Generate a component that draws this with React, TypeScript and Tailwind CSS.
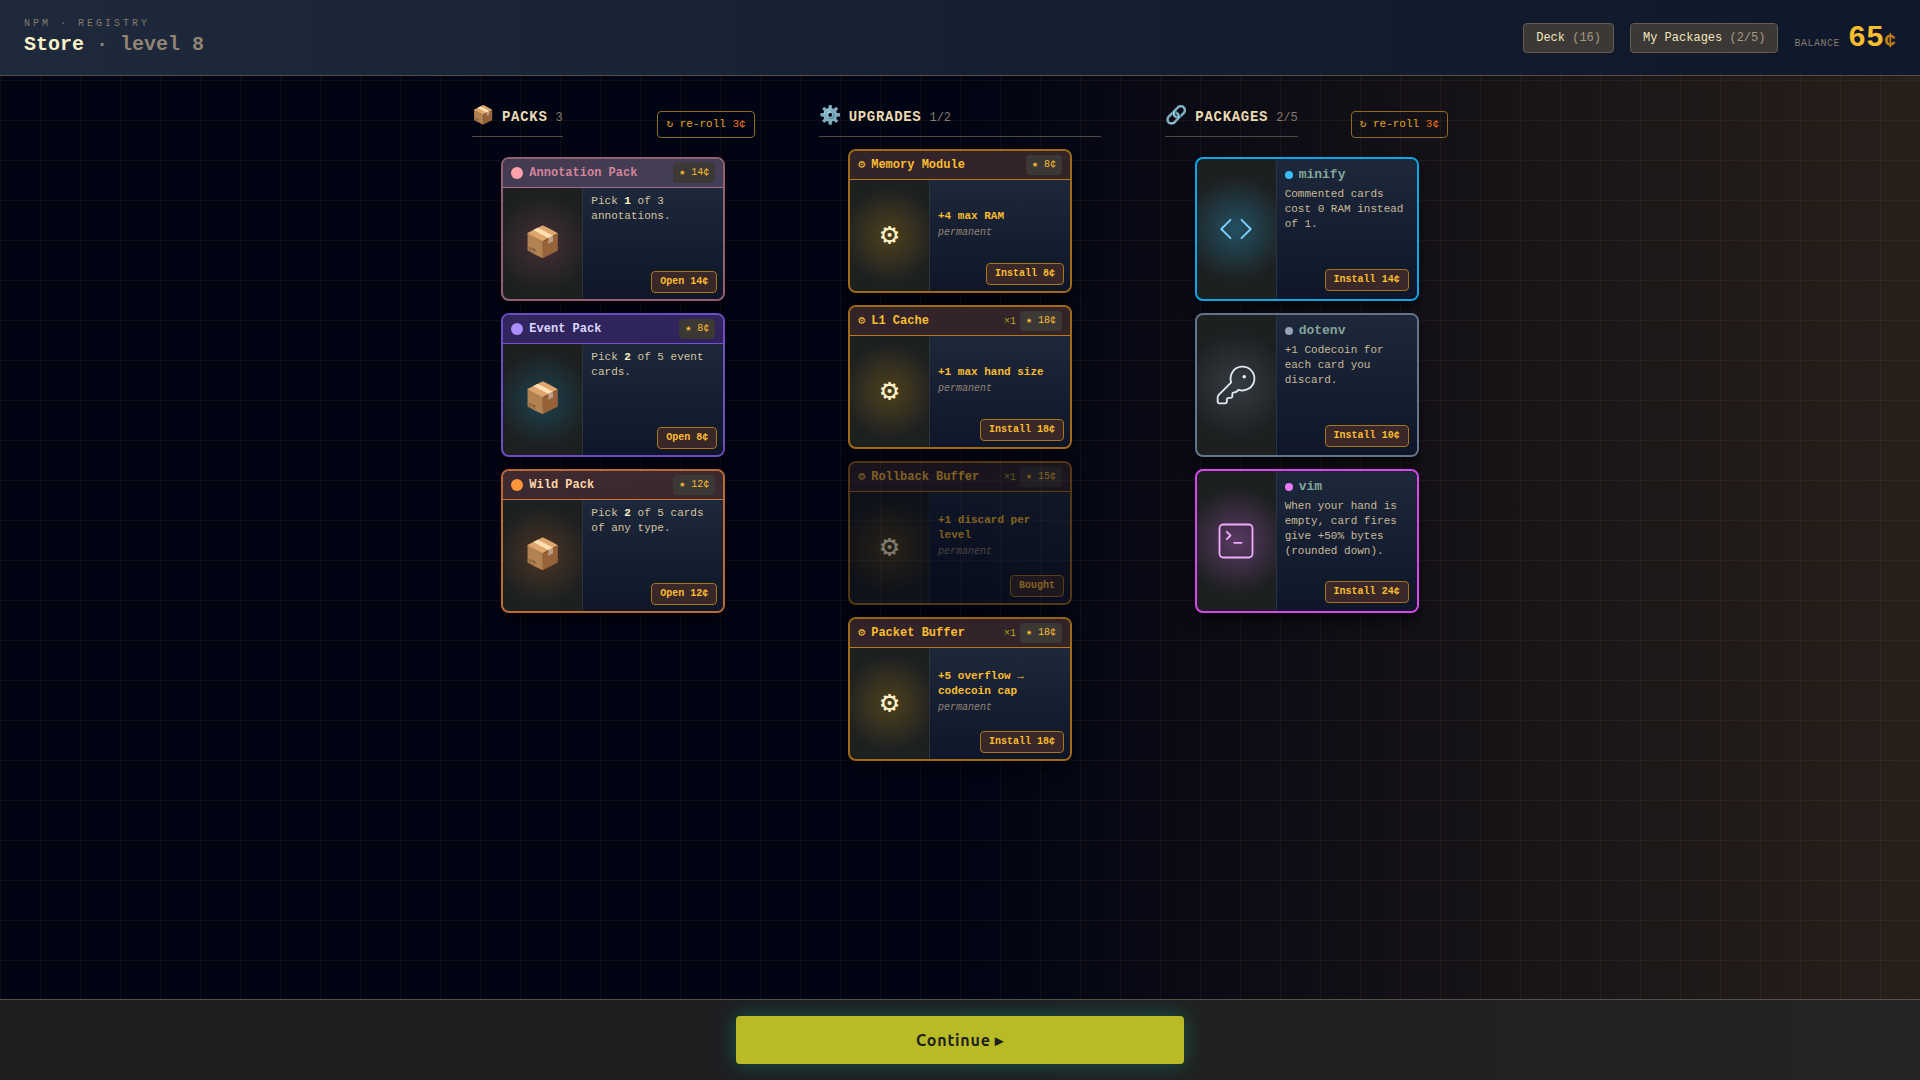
import type { ReactNode } from "react";
import clsx from "clsx";
import { ChevronsLeftRight, KeyRound, SquareTerminal } from "lucide-react";

const packs = [
	{
		name: "Annotation Pack",
		price: 14,
		pick: 1,
		rest: "of 3 annotations.",
		border: "border-[#925f74]",
		header: "border-[#a86c85] bg-linear-to-br from-[#443a4f] to-[#443f59]",
		title: "text-[#d3869b]",
		dot: "bg-[#ffa2ad]",
		glow: "bg-[radial-gradient(circle,#472f37_0%,transparent_70%)]",
	},
	{
		name: "Event Pack",
		price: 8,
		pick: 2,
		rest: "of 5 event cards.",
		border: "border-[#6d4bc3]",
		header: "border-[#7650d0] bg-linear-to-br from-[#33265f] to-[#2d2359]",
		title: "text-[#ddd6ff]",
		dot: "bg-[#ab8eff]",
		glow: "bg-[radial-gradient(circle,#1c424f_0%,transparent_70%)]",
	},
	{
		name: "Wild Pack",
		price: 12,
		pick: 2,
		rest: "of 5 cards of any type.",
		border: "border-[#b96b36]",
		header: "border-[#c87539] bg-linear-to-br from-[#3e2a2f] to-[#3a2830]",
		title: "text-[#ffd7a8]",
		dot: "bg-[#ff953b]",
		glow: "bg-[radial-gradient(circle,#4d3524_0%,transparent_70%)]",
	},
];

const upgrades = [
	{ name: "Memory Module", price: 8, effect: "+4 max RAM" },
	{ name: "L1 Cache", price: 18, effect: "+1 max hand size", stock: 1 },
	{
		name: "Rollback Buffer",
		price: 15,
		effect: "+1 discard per level",
		stock: 1,
		bought: true,
	},
	{
		name: "Packet Buffer",
		price: 18,
		effect: "+5 overflow → codecoin cap",
		stock: 1,
	},
];

const packages = [
	{
		name: "minify",
		price: 14,
		text: "Commented cards cost 0 RAM instead of 1.",
		icon: ChevronsLeftRight,
		border: "border-[#0ea5e9]",
		dot: "bg-[#38bdf8]",
		iconColor: "text-[#7dd3fc]",
		glow: "bg-[radial-gradient(circle,#235062_0%,transparent_65%)]",
	},
	{
		name: "dotenv",
		price: 10,
		text: "+1 Codecoin for each card you discard.",
		icon: KeyRound,
		border: "border-[#64748b]",
		dot: "bg-[#94a3b8]",
		iconColor: "text-[#e2e8f0]",
		glow: "bg-[radial-gradient(circle,#353c42_0%,transparent_65%)]",
	},
	{
		name: "vim",
		price: 24,
		text: "When your hand is empty, card fires give +50% bytes (rounded down).",
		icon: SquareTerminal,
		border: "border-[#d946ef]",
		dot: "bg-[#e879f9]",
		iconColor: "text-[#f0abfc]",
		glow: "bg-[radial-gradient(circle,#5a3a63_0%,transparent_65%)]",
	},
];

function HeaderButton({ label, count }: { label: string; count: string }) {
	return (
		<button className="rounded border border-[#665c54] bg-[#3c3836] px-3 py-1.5 text-xs text-[#f2e5bc]">
			{label} <span className="text-[#a89984]">({count})</span>
		</button>
	);
}

function SectionTitle({
	icon,
	title,
	count,
}: {
	icon: string;
	title: string;
	count: string;
}) {
	return (
		<h2 className="mb-3 flex items-baseline gap-2 border-b border-[#504945] pt-0.5 pb-1.5 text-sm text-[#ebdbb2]">
			<span className="text-lg">{icon}</span>
			<span className="font-bold tracking-wider uppercase">{title}</span>
			<span className="text-xs text-[#857a6e]">{count}</span>
		</h2>
	);
}

function RerollButton() {
	return (
		<button className="rounded border border-[#8f6a1c] px-2 py-1 text-[11px] leading-[17px] text-[#e3a728]">
			↻ re-roll <span className="text-[#f0701c]">3¢</span>
		</button>
	);
}

function Price({ amount }: { amount: number }) {
	return (
		<span className="rounded bg-[#3c3836] px-1.5 py-0.5 text-[10px] leading-4 text-[#fabd2f]">
			★ {amount}¢
		</span>
	);
}

function BuyButton({
	children,
	disabled,
}: {
	children: ReactNode;
	disabled?: boolean;
}) {
	return (
		<button
			disabled={disabled}
			className="self-end rounded border border-[#a8741c] bg-[#3a2829] px-2 py-0.5 text-[10px] leading-4 font-bold text-[#fabd2f]"
		>
			{children}
		</button>
	);
}

function Art({ glow, children }: { glow: string; children: ReactNode }) {
	return (
		<div
			className={clsx(
				"flex w-20 shrink-0 items-center justify-center border-r border-[#2b343c]",
				glow
			)}
		>
			{children}
		</div>
	);
}

const cardClass =
	"flex h-36 w-56 overflow-hidden rounded-lg border-2 bg-[#1d2021] shadow-lg shadow-black/60";
const bodyClass =
	"flex flex-1 flex-col bg-linear-to-b from-[#1d283a] to-[#0f1629]";

export default function App() {
	return (
		<div className="flex min-h-screen flex-col bg-[#010413] bg-[linear-gradient(to_right,transparent_50%,#271f1a_100%)] font-['Liberation_Mono',monospace]">
			<header className="flex items-center justify-between border-b border-[#57504a] bg-linear-to-r from-[#1e293b] to-[#0f172a] px-6 py-4">
				<div>
					<p className="text-[10px] leading-[15px] tracking-[3px] text-[#857a6e] uppercase">
						npm · registry
					</p>
					<h1 className="text-xl font-bold text-[#fbf1c7]">
						Store <span className="text-[#928374]">· level 8</span>
					</h1>
				</div>

				<div className="flex items-center gap-4">
					<HeaderButton label="Deck" count="16" />
					<HeaderButton label="My Packages" count="2/5" />
					<p className="flex items-baseline gap-2">
						<span className="text-[10px] tracking-wider text-[#857a6e] uppercase">
							Balance
						</span>
						<span className="text-3xl font-bold text-[#fabd2f]">
							65<span className="text-xl text-[#bf7d12]">¢</span>
						</span>
					</p>
				</div>
			</header>

			<main className="flex-1 bg-[linear-gradient(to_right,#d6822014_1px,transparent_1px),linear-gradient(to_bottom,#d6822014_1px,transparent_1px)] bg-size-[40px_40px] bg-position-[0_4px]">
				<div className="mx-auto grid max-w-5xl grid-cols-3 gap-16 px-6 py-6">
					<section>
						<div className="mb-2 flex items-center justify-between">
							<SectionTitle icon="📦" title="Packs" count="3" />
							<RerollButton />
						</div>
						<div className="flex flex-col items-center gap-3">
							{packs.map((pack) => (
								<article
									key={pack.name}
									className={clsx(cardClass, "flex-col", pack.border)}
								>
									<div
										className={clsx(
											"flex items-center gap-1.5 border-b px-2 py-1",
											pack.header
										)}
									>
										<span className={clsx("size-3 rounded-full", pack.dot)} />
										<h3
											className={clsx("flex-1 text-xs font-bold", pack.title)}
										>
											{pack.name}
										</h3>
										<Price amount={pack.price} />
									</div>
									<div className="flex flex-1">
										<Art glow={pack.glow}>
											<span className="text-3xl">📦</span>
										</Art>
										<div className={clsx(bodyClass, "py-1.5 pr-1.5 pl-2")}>
											<p className="flex-1 text-[11px] leading-[15px] text-[#d5c4a1]">
												Pick{" "}
												<b className="text-[#fbf1c7]">{pack.pick}</b>{" "}
												{pack.rest}
											</p>
											<BuyButton>Open {pack.price}¢</BuyButton>
										</div>
									</div>
								</article>
							))}
						</div>
					</section>

					<section>
						<SectionTitle icon="⚙️" title="Upgrades" count="1/2" />
						<div className="flex flex-col items-center gap-3">
							{upgrades.map((item) => (
								<article
									key={item.name}
									className={clsx(
										cardClass,
										"flex-col border-[#a16a16]",
										item.bought && "opacity-50"
									)}
								>
									<div className="flex items-center gap-1 border-b border-[#b47a1c] bg-[#33242a] px-2 py-1">
										<h3 className="flex flex-1 gap-1.5 text-xs font-bold text-[#fabd2f]">
											<span className="font-normal">⚙</span>
											{item.name}
										</h3>
										{item.stock && (
											<span className="text-[10px] text-[#a5a823]">
												×{item.stock}
											</span>
										)}
										<Price amount={item.price} />
									</div>
									<div className="flex flex-1">
										<Art glow="bg-[radial-gradient(circle,#4f401d_0%,transparent_70%)]">
											<span className="text-3xl text-[#fbf1c7]">⚙</span>
										</Art>
										<div className={clsx(bodyClass, "py-1.5 pr-1.5 pl-2")}>
											<div className="flex flex-1 flex-col justify-center">
												<p className="text-[11px] leading-[15px] font-bold text-[#fabd2f]">
													{item.effect}
												</p>
												<p className="pt-px text-[10px] leading-4 text-[#928374] italic">
													permanent
												</p>
											</div>
											<BuyButton disabled={item.bought}>
												{item.bought ? "Bought" : `Install ${item.price}¢`}
											</BuyButton>
										</div>
									</div>
								</article>
							))}
						</div>
					</section>

					<section>
						<div className="mb-2 flex items-center justify-between">
							<SectionTitle icon="🔗" title="Packages" count="2/5" />
							<RerollButton />
						</div>
						<div className="flex flex-col items-center gap-3">
							{packages.map((pkg) => (
								<article
									key={pkg.name}
									className={clsx(cardClass, pkg.border)}
								>
									<Art glow={pkg.glow}>
										<pkg.icon
											size={44}
											strokeWidth={1}
											className={pkg.iconColor}
										/>
									</Art>
									<div className={clsx(bodyClass, "p-2")}>
										<h3 className="mb-1 flex items-center gap-1.5 text-[13px] leading-4 font-bold text-[#83a598]">
											<span
												className={clsx("size-2 rounded-full", pkg.dot)}
											/>
											{pkg.name}
										</h3>
										<p className="flex-1 text-[11px] leading-[15px] text-[#c8b99a]">
											{pkg.text}
										</p>
										<BuyButton>Install {pkg.price}¢</BuyButton>
									</div>
								</article>
							))}
						</div>
					</section>
				</div>
			</main>

			<footer className="flex justify-center border-t border-[#57504a] bg-[#252525]/80 p-4">
				<button className="h-12 w-full max-w-md rounded bg-[#b8bb26] font-['Ubuntu','Noto_Sans',sans-serif] font-bold tracking-wider text-[#1d2021] shadow-[0_0_20px_#10b98166]">
					Continue ▸
				</button>
			</footer>
		</div>
	);
}
